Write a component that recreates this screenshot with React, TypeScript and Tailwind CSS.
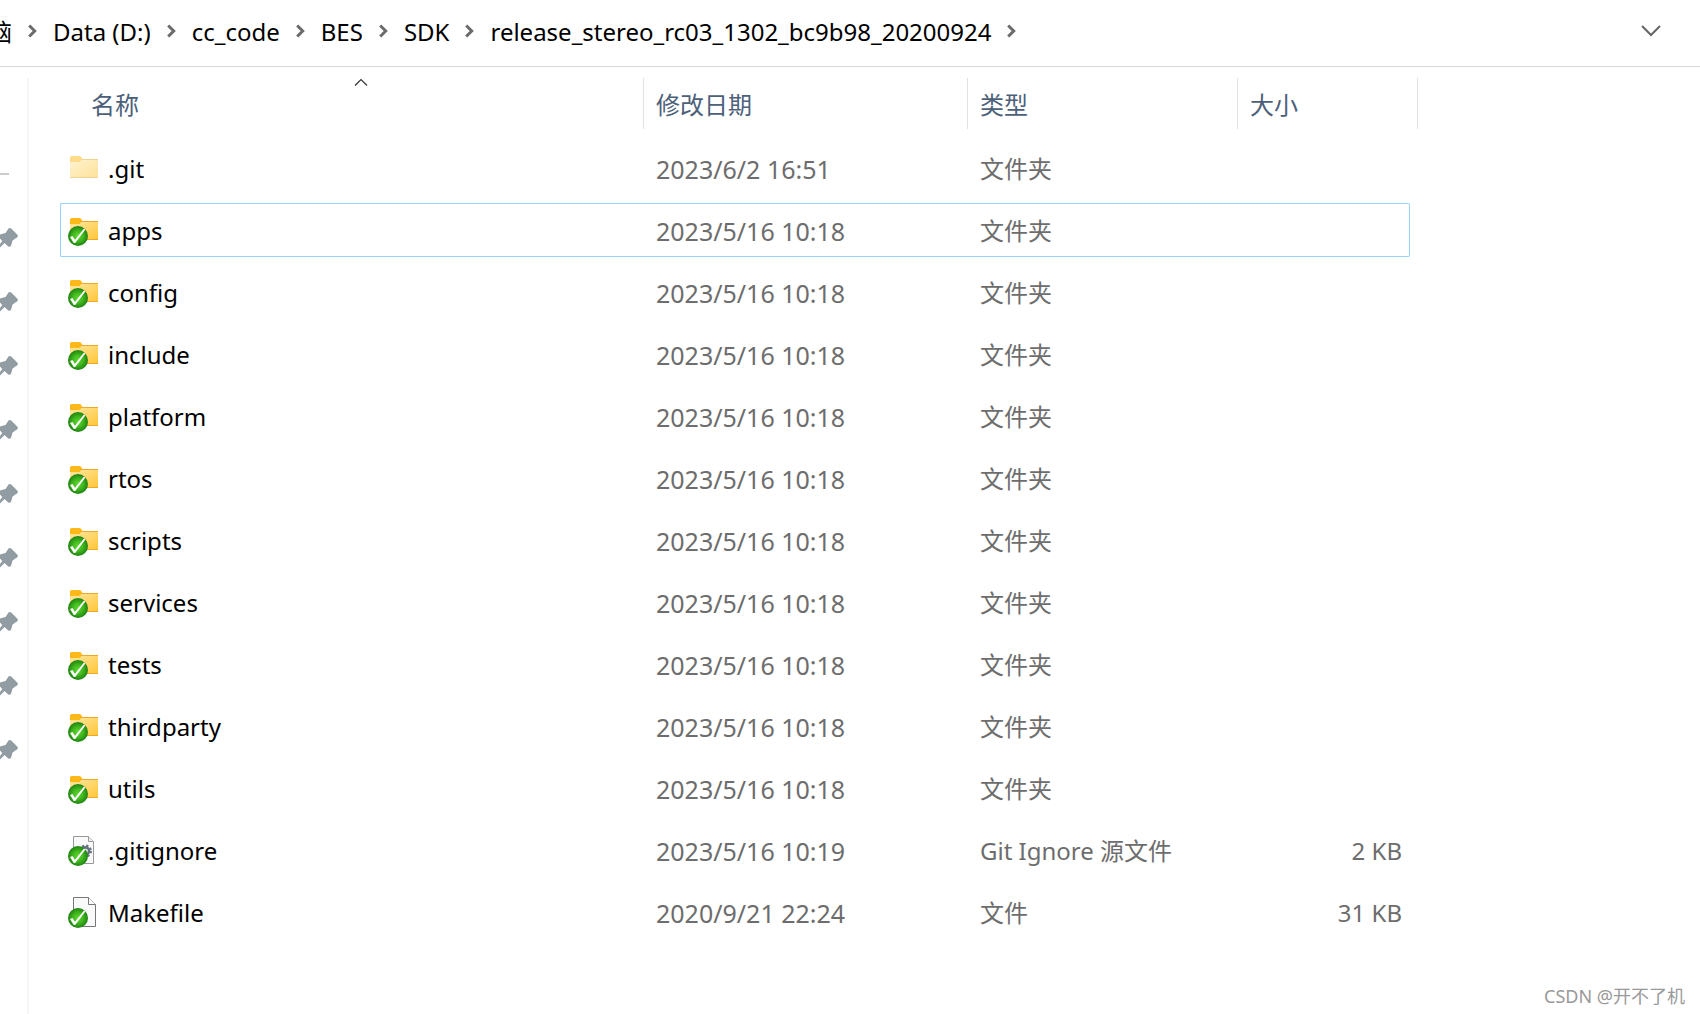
const PATH = ["脑", "Data (D:)", "cc_code", "BES", "SDK", "release_stereo_rc03_1302_bc9b98_20200924"];

type Kind = "hidden" | "folder" | "config" | "file";

interface Entry {
  name: string;
  date: string;
  type: string;
  size?: string;
  kind: Kind;
  focused?: boolean;
}

const ENTRIES: Entry[] = [
  { name: ".git",       date: "2023/6/2 16:51",  type: "文件夹", kind: "hidden" },
  { name: "apps",       date: "2023/5/16 10:18", type: "文件夹", kind: "folder", focused: true },
  { name: "config",     date: "2023/5/16 10:18", type: "文件夹", kind: "folder" },
  { name: "include",    date: "2023/5/16 10:18", type: "文件夹", kind: "folder" },
  { name: "platform",   date: "2023/5/16 10:18", type: "文件夹", kind: "folder" },
  { name: "rtos",       date: "2023/5/16 10:18", type: "文件夹", kind: "folder" },
  { name: "scripts",    date: "2023/5/16 10:18", type: "文件夹", kind: "folder" },
  { name: "services",   date: "2023/5/16 10:18", type: "文件夹", kind: "folder" },
  { name: "tests",      date: "2023/5/16 10:18", type: "文件夹", kind: "folder" },
  { name: "thirdparty", date: "2023/5/16 10:18", type: "文件夹", kind: "folder" },
  { name: "utils",      date: "2023/5/16 10:18", type: "文件夹", kind: "folder" },
  { name: ".gitignore", date: "2023/5/16 10:19", type: "Git Ignore 源文件", size: "2 KB", kind: "config" },
  { name: "Makefile",   date: "2020/9/21 22:24", type: "文件", size: "31 KB", kind: "file" },
];

function Gradients() {
  return (
    <svg className="absolute size-0" aria-hidden="true">
      <defs>
        <linearGradient id="folder" x1="0" y1="0" x2="1" y2="1">
          <stop offset="0" stopColor="#ffe8a4" />
          <stop offset="1" stopColor="#ffc636" />
        </linearGradient>
        <radialGradient id="badge" cx="0.5" cy="0.5" r="0.5">
          <stop offset="0" stopColor="#5fdb2c" />
          <stop offset="0.55" stopColor="#3fb41d" />
          <stop offset="1" stopColor="#1f8212" />
        </radialGradient>
      </defs>
    </svg>
  );
}

function EntryIcon({ kind }: { kind: Kind }) {
  return (
    <svg viewBox="0 0 32 32" className="size-8 shrink-0" aria-hidden="true">
      {(kind === "folder" || kind === "hidden") && (
        <g opacity={kind === "hidden" ? 0.5 : 1}>
          <path d="M3 11V5.5Q3 4 4.500 4H12.500Q13.500 4 14 4.800L15.500 7V11Z" fill="#fdb91a" />
          <path d="M3 10H12.500L15.500 7H31V26H3Z" fill="url(#folder)" />
          <path d="M14.500 7.500H31M3 25.500H31" stroke="#eba928" fill="none" />
        </g>
      )}
      {kind === "config" && (
        <>
          <path d="M6.500 2.500H21.500L26.500 7.500V29.500H6.500Z" fill="#f9f9f9" stroke="#999" />
          <path d="M21.500 2.500V7.500H26.500" fill="#eee" stroke="#999" />
          <circle cx="18.500" cy="17" r="3.600" fill="none" stroke="#64717f" strokeWidth="2.600" />
          <circle cx="18.500" cy="17" r="5.500" fill="none" stroke="#64717f" strokeWidth="2" strokeDasharray="2.300 2.020" />
        </>
      )}
      {kind === "file" && (
        <>
          <path d="M6.500 1.500H21.500L28.500 8.500V30.500H6.500Z" fill="#f9f9f9" stroke="#777" />
          <path d="M21.500 1.500V8.500H28.500" fill="#fff" stroke="#777" />
        </>
      )}
      {kind !== "hidden" && (
        <>
          <circle cx="11" cy="22" r="10" fill="url(#badge)" />
          <path d="M3 23L5.500 22L8 25.800L17 14.500L18.400 15.500L8.200 29H6.800Z" fill="#fff" />
        </>
      )}
    </svg>
  );
}

function Pin() {
  return (
    <svg viewBox="0 0 18 20" className="h-5 w-[18px]" fill="#919ca3" aria-hidden="true">
      <path d="M8.500 0.500Q10 -0.400 11.500 0.800L17.400 6.700Q18.500 8.300 17 9.500L12.500 12.500L11 18Q9.500 19.500 8 18.300L4.500 15L0 19.500V16L2.300 13L0 10.500V6.500L5.500 5Z" />
    </svg>
  );
}

function Crumb() {
  return (
    <svg viewBox="0 0 9 14" className="h-3.5 w-[9px] shrink-0" fill="none" stroke="#6b6b6b" strokeWidth="3" aria-hidden="true">
      <path d="M1.200 1.500L6.700 7L1.200 12.500" />
    </svg>
  );
}

export default function App() {
  return (
    <div className="relative flex min-h-screen flex-col overflow-hidden bg-white font-['Noto_Sans','Noto_Sans_CJK_SC',sans-serif] text-2xl text-black">
      <Gradients />

      {/* Address bar */}
      <header className="flex h-[67px] items-center justify-between border-b border-[#d9d9d9] pr-[39px] pb-1">
        <nav className="-ml-3 flex items-center gap-4 whitespace-nowrap">
          {PATH.map(part => (
            <div key={part} className="flex items-center gap-4">
              <a href="#" className="pt-0.5">{part}</a>
              <Crumb />
            </div>
          ))}
        </nav>
        <button aria-label="展开">
          <svg viewBox="0 0 20 12" className="h-3 w-5" fill="none" stroke="#666" strokeWidth="2" aria-hidden="true">
            <path d="M1 1L10 10L19 1" />
          </svg>
        </button>
      </header>

      <div className="flex flex-1">
        {/* Quick access strip */}
        <aside className="mt-[11px] w-[29px] shrink-0 border-r-2 border-[#f5f5f5] pt-[95px]">
          <div className="h-0.5 w-[9px] bg-[#ccc]" />
          <div className="mt-[53px] flex flex-col gap-11">
            {Array.from({ length: 9 }, (_, i) => <Pin key={i} />)}
          </div>
        </aside>

        <main className="min-w-0 flex-1 pt-[3px] pl-[31px]">
          <table className="table-fixed border-separate border-spacing-x-0 border-spacing-y-2 text-left whitespace-nowrap">
            <colgroup>
              <col className="w-[583px]" />
              <col className="w-[324px]" />
              <col className="w-[270px]" />
              <col className="w-[173px]" />
              <col className="w-2" />
            </colgroup>
            <thead className="text-[#4c607a]">
              <tr>
                <th className="relative p-0 pb-1 font-normal">
                  <button className="flex h-[51px] w-full items-center pt-0.5 pl-[31px]">名称</button>
                  <svg viewBox="0 0 14 8" className="absolute top-0 left-[294px] h-2 w-3.5" fill="none" stroke="#333" strokeWidth="1.200" aria-hidden="true">
                    <path d="M1 7.500L7 1.500L13 7.500" />
                  </svg>
                </th>
                <th className="p-0 pb-1 font-normal">
                  <button className="flex h-[51px] w-full items-center border-l border-[#e2e2e2] pt-0.5 pl-3">修改日期</button>
                </th>
                <th className="p-0 pb-1 font-normal">
                  <button className="flex h-[51px] w-full items-center border-l border-[#e2e2e2] pt-0.5 pl-3">类型</button>
                </th>
                <th colSpan={2} className="p-0 pb-1 font-normal">
                  <button className="flex h-[51px] w-full items-center border-x border-[#e2e2e2] pt-0.5 pl-3">大小</button>
                </th>
              </tr>
            </thead>
            <tbody className="text-[#6d6d6d]">
              {ENTRIES.map(e => {
                const border = e.focused ? "border-[#99d1ff]" : "border-transparent";
                return (
                  <tr key={e.name}>
                    <td className={`h-[54px] rounded-l-xs border-y border-l p-0 pl-1.5 ${border}`}>
                      <div className="flex items-center gap-[9px] text-black">
                        <EntryIcon kind={e.kind} />
                        <span className="pt-0.5">{e.name}</span>
                      </div>
                    </td>
                    <td className={`border-y p-0 pt-0.5 pl-[13px] text-[25px] leading-8 ${border}`}>{e.date}</td>
                    <td className={`border-y p-0 pt-0.5 pl-[13px] ${border}`}>{e.type}</td>
                    <td className={`rounded-r-xs border-y border-r p-0 pt-0.5 pr-[7px] text-right ${border}`}>{e.size}</td>
                  </tr>
                );
              })}
            </tbody>
          </table>
        </main>
      </div>

      <p className="absolute right-[15px] bottom-1 text-lg text-[#999]">CSDN @开不了机</p>
    </div>
  );
}
